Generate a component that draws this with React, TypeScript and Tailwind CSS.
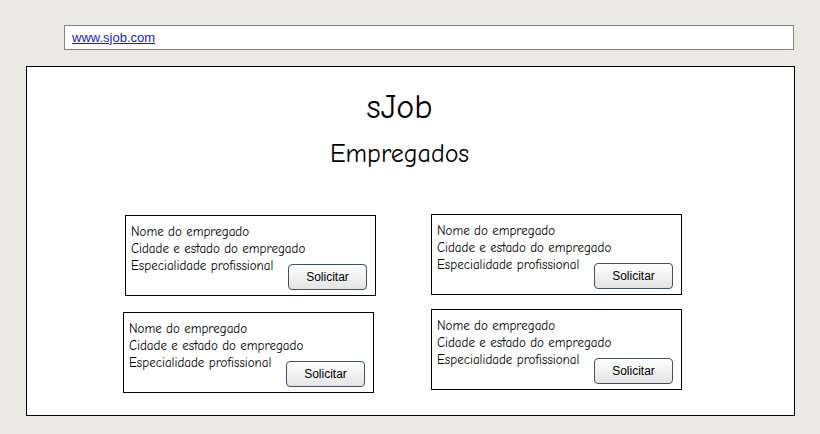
const employees = [
  { id: 1, offset: 'mt-[1px] ml-[2px]' },
  { id: 2, offset: 'ml-[2px]' },
  { id: 3, offset: 'mt-[3px] ml-0' },
  { id: 4, offset: 'ml-[2px]' },
];

const sketch = { fontFamily: '"Comic Sans MS", "Comic Neue", "DejaVu Sans", sans-serif' };

function EmployeeCard({ offset }: { offset: string }) {
  return (
    <div
      className={`relative w-[251px] h-[81px] border border-black bg-white pl-[5px] pt-[7px] ${offset}`}
      style={sketch}
    >
      <div className="text-[13px] leading-[17px] text-black">
        <div>Nome do empregado</div>
        <div>Cidade e estado do empregado</div>
        <div>Especialidade profissional</div>
      </div>
      <button className="absolute right-[8px] bottom-[5px] w-[79px] h-[26px] rounded-[4px] border border-[#3e5266] bg-gradient-to-b from-white to-[#e4e4e4] text-[12px] text-black font-['Liberation_Sans',sans-serif]">
        Solicitar
      </button>
    </div>
  );
}

export default function App() {
  return (
    <div className="w-[820px] h-[434px] bg-[#ebe9e4] pt-[25px] overflow-hidden">
      {/* address bar */}
      <div className="ml-[64px] w-[730px] h-[25px] border border-[#858585] bg-white flex items-center pl-[7px]">
        <a href="#" className="text-[13px] text-[#1a1acc] underline font-['Liberation_Sans',sans-serif]">
          www.sjob.com
        </a>
      </div>

      {/* page */}
      <div className="ml-[26px] mt-[16px] w-[769px] h-[350px] border border-black bg-white" style={sketch}>
        <div className="text-center text-[34px] leading-[40px] mt-[20px] pr-[22px] text-black">sJob</div>
        <div className="text-center text-[26px] leading-[30px] mt-[12px] pr-[22px] text-black">Empregados</div>
        <div className="grid grid-cols-[251px_251px] gap-x-[55px] gap-y-[13px] ml-[96px] mt-[45px]">
          {employees.map((e) => (
            <EmployeeCard key={e.id} offset={e.offset} />
          ))}
        </div>
      </div>
    </div>
  );
}
